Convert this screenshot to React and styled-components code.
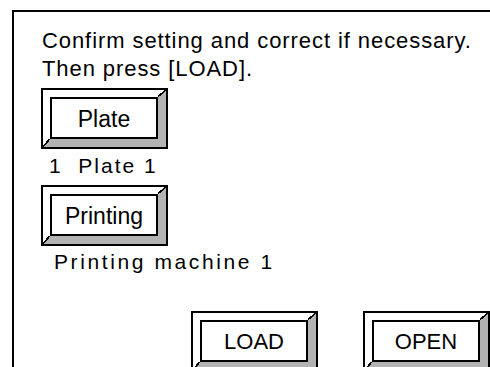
import React from "react";
import styled, { createGlobalStyle } from "styled-components";

const Global = createGlobalStyle`
  html, body {
    margin: 0;
    padding: 0;
    background: #ffffff;
    overflow: hidden;
  }
  body {
    font-family: "Liberation Sans", Arial, Helvetica, sans-serif;
    color: #000;
  }
`;

const Screen = styled.div`
  width: 490px;
  height: 367px;
  overflow: hidden;
  background: #fff;
`;

const Panel = styled.div`
  margin: 10px 0 0 12px;
  width: 620px;
  height: 500px;
  box-sizing: border-box;
  border: 2px solid #000;
  padding: 15px 0 0 27px;
  display: flex;
  flex-direction: column;
  align-items: flex-start;
`;

const Message = styled.p`
  margin: 0 0 5px 1px;
  font-size: 22px;
  line-height: 28px;
  letter-spacing: 0.92px;
`;

const Value = styled.div`
  margin: ${(p) => p.$mt}px 0 0 ${(p) => p.$ml}px;
  font-size: 21px;
  line-height: 24px;
  letter-spacing: ${(p) => p.$ls}px;
  white-space: pre;
`;

const ButtonRow = styled.div`
  display: flex;
  gap: 45px;
  margin: 37px 0 0 150px;
`;

const Outer = styled.div`
  margin-top: ${(p) => p.$mt || 0}px;
  border: 2px solid #000;
  background: #fff;
  display: inline-block;
`;

const Bevel = styled.div`
  position: relative;
  border-style: solid;
  border-width: 7px 8px 8px 7px;
  border-color: #ffffff #b3b3b3 #b3b3b3 #ffffff;

  &::before,
  &::after {
    content: "";
    position: absolute;
    background: linear-gradient(
      to bottom right,
      transparent calc(50% - 1px),
      #000 calc(50% - 1px),
      #000 calc(50% + 0.6px),
      transparent calc(50% + 0.6px)
    );
  }
  &::before {
    top: -7px;
    right: -8px;
    width: 8px;
    height: 7px;
  }
  &::after {
    bottom: -8px;
    left: -7px;
    width: 7px;
    height: 8px;
  }
`;

const Face = styled.div`
  width: 104px;
  height: 36px;
  border: 2px solid #000;
  background: #fff;
  display: flex;
  align-items: center;
  justify-content: center;
  padding-top: 2px;
  box-sizing: content-box;
  font-size: ${(p) => p.$fs}px;
  line-height: 24px;
`;

function BevelButton({ children, mt, fs = 23 }) {
  return (
    <Outer $mt={mt}>
      <Bevel>
        <Face $fs={fs}>{children}</Face>
      </Bevel>
    </Outer>
  );
}

export default function App() {
  return (
    <Screen>
      <Global />
      <Panel>
        <Message>
          Confirm setting and correct if necessary.
          <br />
          Then press [LOAD].
        </Message>
        <BevelButton>Plate</BevelButton>
        <Value $mt={5} $ml={8} $ls={2}>{"1  Plate 1"}</Value>
        <BevelButton mt={7}>Printing</BevelButton>
        <Value $mt={4} $ml={13} $ls={2.6}>Printing machine 1</Value>
        <ButtonRow>
          <BevelButton fs={22}>LOAD</BevelButton>
          <BevelButton fs={22}>OPEN</BevelButton>
        </ButtonRow>
      </Panel>
    </Screen>
  );
}
